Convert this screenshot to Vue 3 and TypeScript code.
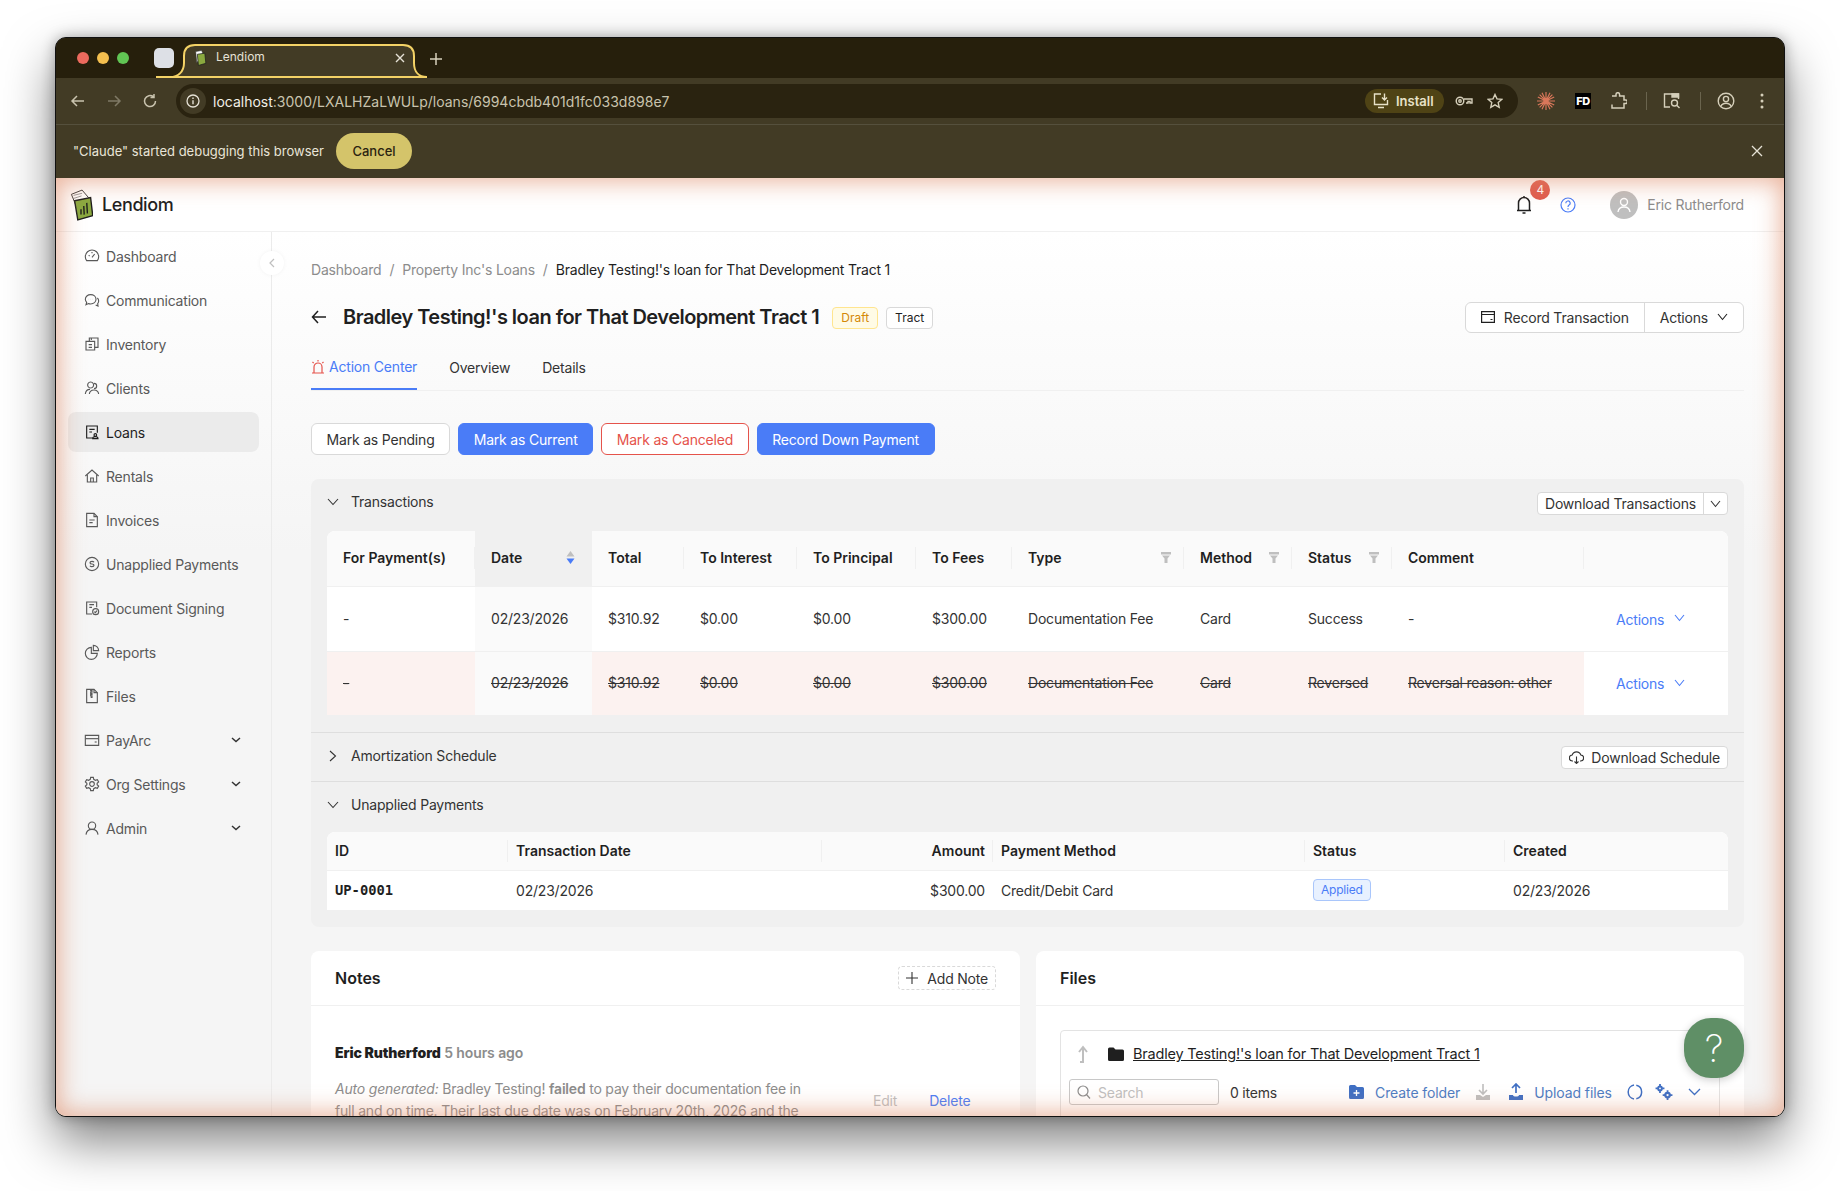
<template>
  <div class="shot">
    <div class="window">
      <div class="tabstrip">
        <div class="lights"><i class="red" /><i class="yellow" /><i class="green" /></div>
        <div class="group-chip" />
        <div class="tab">
          <svg class="tab-shape" width="271" height="34" viewBox="0 0 271 34">
            <path d="M0 33h14c8 0 14-5 14-14V12C28 5 32 1 39 1h208c7 0 11 4 11 11v7c0 9 5 14 13 14z" fill="#423b25" stroke="#f3d266" stroke-width="2" />
          </svg>
          <svg class="tab-fav" width="14" height="16" viewBox="0 0 22 30">
            <path d="M3 3l11-2 3 7-12 16z" fill="#fff" stroke="#333" />
            <path d="M6 8l14-2 2 19-14 4z" fill="#8aa83f" stroke="#1d1d1d" stroke-width="1.4" />
          </svg>
          <span class="tab-title">Lendiom</span>
          <svg class="tab-close" width="10" height="10" viewBox="0 0 10 10"><path d="M1 1l8 8M9 1l-8 8" stroke="#e6e2d6" stroke-width="1.4" /></svg>
        </div>
        <svg class="new-tab" width="12" height="12" viewBox="0 0 12 12"><path d="M6 0v12M0 6h12" stroke="#d8d2bd" stroke-width="1.5" /></svg>
      </div>

      <div class="toolbar">
        <svg class="nav-ic" width="16" height="16" viewBox="0 0 16 16"><path d="M14 8H2M7 3L2 8l5 5" stroke="#c9c3ae" stroke-width="1.5" fill="none" /></svg>
        <svg class="nav-ic" width="16" height="16" viewBox="0 0 16 16"><path d="M2 8h12M9 3l5 5-5 5" stroke="#7f7965" stroke-width="1.5" fill="none" /></svg>
        <svg class="nav-ic" width="16" height="16" viewBox="0 0 16 16"><path d="M13.5 8A5.5 5.5 0 1 1 11.5 3.8M12 1v3.5H8.5" stroke="#c9c3ae" stroke-width="1.5" fill="none" /></svg>
        <div class="urlbar">
          <span class="info-dot">
            <svg width="14" height="14" viewBox="0 0 14 14"><circle cx="7" cy="7" r="6" fill="none" stroke="#e6e2d6" stroke-width="1.3" /><path d="M7 6.3v4M7 3.6V5" stroke="#e6e2d6" stroke-width="1.4" /></svg>
          </span>
          <span class="url"><b>localhost</b>:3000/LXALHZaLWULp/loans/6994cbdb401d1fc033d898e7</span>
          <span class="install">
            <svg width="18" height="18" viewBox="0 0 18 18" fill="none" stroke="#e8e2c8" stroke-width="1.4"><path d="M9 2H2.5v10.500h13V8M6 15.500h6M12.500 1.500v6M10 5.500l2.500 2.500L15 5.500" /></svg>
            Install
          </span>
          <svg class="url-ic" width="18" height="12" viewBox="0 0 18 12" fill="none" stroke="#d5cfba" stroke-width="1.4"><circle cx="5" cy="6" r="3.8" /><circle cx="5" cy="6" r="1.2" /><path d="M9 4h8v4h-2V6.500h-2V8h-2" /></svg>
          <svg class="url-ic star" width="16" height="16" viewBox="0 0 16 16" fill="none" stroke="#d5cfba" stroke-width="1.4"><path d="M8 1.500l2 4.400 4.700.5-3.500 3.200 1 4.700L8 11.900l-4.200 2.400 1-4.700L1.300 6.400 6 5.900z" /></svg>
        </div>
        <svg class="ext spark" width="18" height="18" viewBox="0 0 18 18" stroke="#d9775a" stroke-width="1.2"><path d="M9 0v18M0 9h18M2.600 2.600l12.800 12.800M15.400 2.600L2.600 15.400M5 .8l8 16.400M13 .8L5 17.200M.8 5l16.400 8M17.200 5L.8 13" /></svg>
        <span class="ext fd">FD</span>
        <svg class="ext puzzle" width="16" height="18" viewBox="0 0 16 18" fill="none" stroke="#d5cfba" stroke-width="1.5"><path d="M1 4h4V2.500a1.800 1.800 0 0 1 3.600 0V4H13v4h1.500a1.800 1.800 0 0 1 0 3.600H13V16H1v-3.500" /></svg>
        <i class="tb-sep" />
        <svg class="ext tabsearch" width="18" height="18" viewBox="0 0 18 18" fill="none" stroke="#d5cfba" stroke-width="1.4"><path d="M7 15H1.500V2h14v5" /><path d="M9 2h6.500v3H9z" fill="#d5cfba" /><circle cx="11.500" cy="11" r="3" /><path d="M13.700 13.200l2.800 2.800" /></svg>
        <i class="tb-sep" />
        <svg class="ext profile" width="18" height="18" viewBox="0 0 18 18" fill="none" stroke="#d5cfba" stroke-width="1.4"><circle cx="9" cy="9" r="7.8" /><circle cx="9" cy="7" r="2.6" /><path d="M3.800 14.500c1-2.500 3-3.300 5.200-3.300s4.200.8 5.200 3.300" /></svg>
        <svg class="ext dots" width="4" height="16" viewBox="0 0 4 16" fill="#d5cfba"><circle cx="2" cy="2" r="1.5" /><circle cx="2" cy="8" r="1.5" /><circle cx="2" cy="14" r="1.5" /></svg>
      </div>

      <div class="infobar">
        <span>"Claude" started debugging this browser</span>
        <button class="cancel">Cancel</button>
        <svg class="info-close" width="12" height="12" viewBox="0 0 12 12"><path d="M1 1l10 10M11 1L1 11" stroke="#e6e2d6" stroke-width="1.3" /></svg>
      </div>

      <div class="app">
        <header class="app-head">
          <svg class="logo" width="24" height="32" viewBox="0 0 22 30">
            <path d="M2 5l10-4 6 7-9 14z" fill="#fff" stroke="#333" stroke-width=".9" />
            <path d="M4 6l8-2M3.500 9l8-2.500" stroke="#777" stroke-width=".7" />
            <path d="M5 11l15-3 2 17-14 4z" fill="#8aa83f" stroke="#1d1d1d" stroke-width="1.3" />
            <path d="M11 24v-5M14 24l-.4-8M17 23l-.6-10" stroke="#1d1d1d" stroke-width="1.3" />
          </svg>
          <span class="brand">Lendiom</span>
          <div class="head-right">
            <span class="bell">
              <svg width="16" height="20" viewBox="0 0 16 20" fill="none" stroke="#1f1f1f" stroke-width="1.5"><path d="M8 1v1.500M2.500 15.500V8a5.500 5.500 0 0 1 11 0v7.500M1 15.500h14M6.500 18h3" /></svg>
              <em class="badge">4</em>
            </span>
            <svg class="help-ic" width="16" height="16" viewBox="0 0 16 16" fill="none" stroke="#4a7cf7" stroke-width="1.2"><circle cx="8" cy="8" r="7" /><path d="M5.800 6.200a2.200 2.200 0 1 1 3.300 1.900c-.8.500-1.100.9-1.100 1.800M8 11.200v1.300" /></svg>
            <span class="avatar">
              <svg width="16" height="16" viewBox="0 0 16 16" fill="none" stroke="#fff" stroke-width="1.4"><circle cx="8" cy="5" r="3.5" /><path d="M2 15c.4-3.500 2.800-5 6-5s5.600 1.500 6 5" /></svg>
            </span>
            <span class="user">Eric Rutherford</span>
          </div>
        </header>

        <div class="app-body">
          <aside class="sidebar">
            <button class="collapse-btn">
              <svg width="8" height="10" viewBox="0 0 8 10"><path d="M6 1L2 5l4 4" fill="none" stroke="#bfbfbf" stroke-width="1.2" /></svg>
            </button>
            <div v-for="item in menu" :key="item.label" class="menu-item" :class="{ active: item.label === 'Loans' }">
              <svg class="menu-ic" width="16" height="16" viewBox="0 0 24 24" fill="none" stroke="currentColor" stroke-width="1.7">
                <path v-for="d in icons[item.icon]" :key="d" :d="d" />
              </svg>
              <span>{{ item.label }}</span>
              <svg v-if="item.more" class="menu-caret" width="10" height="6" viewBox="0 0 10 6"><path d="M1 1l4 3.500L9 1" fill="none" stroke="#333" stroke-width="1.5" /></svg>
            </div>
          </aside>

          <main class="main">
            <nav class="crumbs">
              <span>Dashboard</span><i>/</i><span>Property Inc's Loans</span><i>/</i><span class="here">Bradley Testing!'s loan for That Development Tract 1</span>
            </nav>

            <div class="title-row">
              <svg class="back" width="16" height="14" viewBox="0 0 16 14"><path d="M15 7H1.500M7 1L1.500 7 7 13" fill="none" stroke="#1f1f1f" stroke-width="1.5" /></svg>
              <h1>Bradley Testing!'s loan for That Development Tract 1</h1>
              <span class="tag draft">Draft</span>
              <span class="tag">Tract</span>
              <div class="title-actions">
                <button class="seg">
                  <svg width="14" height="12" viewBox="0 0 14 12" fill="none" stroke="#1f1f1f" stroke-width="1.2"><path d="M.6.600h12.800v10.800H.6zM.6 3.500h12.800M9.500 8.500h2" /></svg>
                  Record Transaction
                </button>
                <button class="seg">
                  Actions
                  <svg width="11" height="8" viewBox="0 0 11 8"><path d="M1 1l4.500 5.500L10 1" fill="none" stroke="#1f1f1f" stroke-width="1.1" /></svg>
                </button>
              </div>
            </div>

            <div class="tabs">
              <div class="tab-link current">
                <svg width="14" height="15" viewBox="0 0 14 15" fill="none" stroke="#e5534b" stroke-width="1.2"><path d="M1 14h12M3 14V8a4 4 0 0 1 8 0v6M7 1v1.500M1.500 3l1.200 1.200M12.500 3l-1.200 1.200" /></svg>
                Action Center
              </div>
              <div class="tab-link">Overview</div>
              <div class="tab-link">Details</div>
            </div>

            <div class="actions-row">
              <button class="btn">Mark as Pending</button>
              <button class="btn primary">Mark as Current</button>
              <button class="btn danger">Mark as Canceled</button>
              <button class="btn primary">Record Down Payment</button>
            </div>

            <section class="panel">
              <div class="panel-head first">
                <svg class="chev" width="12" height="8" viewBox="0 0 12 8"><path d="M1 1l5 5.500L11 1" fill="none" stroke="#333" stroke-width="1.1" /></svg>
                <span>Transactions</span>
                <div class="mini-group">
                  <button>Download Transactions</button>
                  <button class="mini-caret"><svg width="11" height="8" viewBox="0 0 11 8"><path d="M1 1l4.500 5.500L10 1" fill="none" stroke="#333" stroke-width="1.1" /></svg></button>
                </div>
              </div>
              <div class="panel-body">
                <table class="grid tx">
                  <colgroup><col v-for="c in txCols" :key="c.name" :style="{ width: c.width + 'px' }" /></colgroup>
                  <thead>
                    <tr>
                      <th v-for="c in txCols" :key="c.name" :class="{ sorted: c.name === 'Date' }">
                        <div class="th-in">
                          <span>{{ c.name }}</span>
                          <svg v-if="c.filter" width="10" height="11" viewBox="0 0 10 11" fill="#bfbfbf"><path d="M0 0h10v2.500H0zM1 3.500h8L6.500 6.500V11h-3V6.500z" /></svg>
                          <svg v-if="c.name === 'Date'" width="9" height="15" viewBox="0 0 9 15"><path d="M4.500 1L8.500 6.500H.5z" fill="#bfbfbf" /><path d="M.5 8.500h8l-4 5.500z" fill="#4a7cf7" /></svg>
                        </div>
                      </th>
                    </tr>
                  </thead>
                  <tbody>
                    <tr v-for="(row, i) in txRows" :key="i" :class="{ reversed: row.reversed }">
                      <td v-for="(val, j) in row.cells" :key="j" :class="{ 'date-cell': j === 1 }"><span class="cell-text">{{ val }}</span></td>
                      <td class="act-cell">
                        <span class="act">Actions
                          <svg width="11" height="8" viewBox="0 0 11 8"><path d="M1 1l4.500 5.500L10 1" fill="none" stroke="#4a7cf7" stroke-width="1.1" /></svg>
                        </span>
                      </td>
                    </tr>
                  </tbody>
                </table>
              </div>

              <div class="panel-head bordered">
                <svg class="chev" width="8" height="12" viewBox="0 0 8 12"><path d="M1 1l5.500 5L1 11" fill="none" stroke="#333" stroke-width="1.1" /></svg>
                <span>Amortization Schedule</span>
                <div class="mini-group">
                  <button class="with-ic">
                    <svg width="15" height="13" viewBox="0 0 15 13" fill="none" stroke="#333" stroke-width="1.1"><path d="M4 10H3.500a3 3 0 0 1-.3-6A4.500 4.500 0 0 1 11.800 4a3 3 0 0 1-.3 6H11M7.500 5.500V12.500M5.500 10.500l2 2 2-2" /></svg>
                    Download Schedule
                  </button>
                </div>
              </div>

              <div class="panel-head bordered short">
                <svg class="chev" width="12" height="8" viewBox="0 0 12 8"><path d="M1 1l5 5.500L11 1" fill="none" stroke="#333" stroke-width="1.1" /></svg>
                <span>Unapplied Payments</span>
              </div>
              <div class="panel-body">
                <table class="grid small">
                  <colgroup><col v-for="c in upCols" :key="c.name" :style="{ width: c.width + 'px' }" /></colgroup>
                  <thead>
                    <tr><th v-for="c in upCols" :key="c.name" :class="{ right: c.name === 'Amount' }">{{ c.name }}</th></tr>
                  </thead>
                  <tbody>
                    <tr>
                      <td class="mono">UP-0001</td>
                      <td>02/23/2026</td>
                      <td class="right">$300.00</td>
                      <td>Credit/Debit Card</td>
                      <td><span class="applied">Applied</span></td>
                      <td>02/23/2026</td>
                    </tr>
                  </tbody>
                </table>
              </div>
            </section>

            <div class="cards">
              <section class="card">
                <div class="card-head">
                  <h2>Notes</h2>
                  <button class="dashed">
                    <svg width="12" height="12" viewBox="0 0 12 12"><path d="M6 0v12M0 6h12" stroke="#333" stroke-width="1.1" /></svg>
                    Add Note
                  </button>
                </div>
                <div class="note">
                  <p class="note-by"><b>Eric Rutherford</b> <span>5 hours ago</span></p>
                  <div class="note-row">
                    <p class="note-text"><em>Auto generated:</em> Bradley Testing! <b>failed</b> to pay their documentation fee in full and on time. Their last due date was on February 20th, 2026 and the</p>
                    <span class="note-edit">Edit</span>
                    <span class="note-del">Delete</span>
                  </div>
                </div>
              </section>

              <section class="card">
                <div class="card-head"><h2>Files</h2></div>
                <div class="browser">
                  <div class="path-row">
                    <svg width="12" height="18" viewBox="0 0 12 18" fill="none" stroke="#bfbfbf" stroke-width="2"><path d="M3 17h3V3M2 7l4-5 4 5" /></svg>
                    <svg class="folder" width="16" height="14" viewBox="0 0 16 14" fill="#1f1f1f"><path d="M0 2a1.500 1.500 0 0 1 1.500-1.500h4L7.500 2.500h7A1.500 1.500 0 0 1 16 4v8.500a1.500 1.500 0 0 1-1.500 1.500h-13A1.500 1.500 0 0 1 0 12.500z" /></svg>
                    <a>Bradley Testing!'s loan for That Development Tract 1</a>
                  </div>
                  <div class="file-tools">
                    <div class="search">
                      <svg width="14" height="14" viewBox="0 0 14 14" fill="none" stroke="#8c8c8c" stroke-width="1.2"><circle cx="6" cy="6" r="5" /><path d="M9.500 9.500L13 13.500" /></svg>
                      <span>Search</span>
                    </div>
                    <span class="count">0 items</span>
                    <svg class="create-ic" width="15" height="14" viewBox="0 0 15 14"><path d="M0 1.500A1.500 1.500 0 0 1 1.500 0H6l2 2h5.500A1.500 1.500 0 0 1 15 3.500v9a1.500 1.500 0 0 1-1.500 1.500h-12A1.500 1.500 0 0 1 0 12.500z" fill="#3f6fc4" /><path d="M7.500 5v6M4.500 8h6" stroke="#fff" stroke-width="1.3" /></svg>
                    <span class="file-link create">Create folder</span>
                    <svg class="dl-ic" width="16" height="16" viewBox="0 0 16 16"><path d="M8 0v9M4 6l4 4 4-4" fill="none" stroke="#bfbfbf" stroke-width="1.6" /><path d="M1 11h4l3 2 3-2h4v5H1z" fill="#bfbfbf" /></svg>
                    <svg class="ul-ic" width="16" height="18" viewBox="0 0 16 18"><path d="M8 10V1M4 5l4-4 4 4" fill="none" stroke="#3f6fc4" stroke-width="1.7" /><path d="M1 12h4c0 2 6 2 6 0h4v5H1z" fill="#3f6fc4" /></svg>
                    <span class="file-link">Upload files</span>
                    <svg class="ring-ic" width="16" height="16" viewBox="0 0 16 16" fill="none" stroke="#3f6fc4" stroke-width="1.5"><path d="M7 1.100A7 7 0 0 0 7 14.900M9.300 1.200A7 7 0 0 1 9.300 14.800" /></svg>
                    <svg class="gear-ic" width="18" height="16" viewBox="0 0 19 18" fill="#3f6fc4"><circle cx="5" cy="5" r="3.200" /><path d="M4 0h2v2.500H4zM4 7.500h2V10H4zM0 4h2.500v2H0zM7.500 4H10v2H7.500z" /><circle cx="5" cy="5" r="1" fill="#fff" /><circle cx="13.500" cy="12.500" r="3.800" /><path d="M12.500 7h2v3h-2zM12.500 15h2v3h-2zM8 11.500h3v2H8zM16 11.500h3v2h-3z" /><circle cx="13.500" cy="12.500" r="1.300" fill="#fff" /></svg>
                    <svg class="more-ic" width="13" height="8" viewBox="0 0 13 8"><path d="M1 1l5.500 5.500L12 1" fill="none" stroke="#3f6fc4" stroke-width="1.3" /></svg>
                  </div>
                </div>
              </section>
            </div>
          </main>
        </div>

        <button class="help-fab">?</button>
        <div class="glow" />
      </div>
    </div>
  </div>
</template>

<script setup lang="ts">
interface MenuItem {
  label: string
  icon: string
  more?: boolean
}

interface Col {
  name: string
  width: number
  filter?: boolean
}

const icons: Record<string, string[]> = {
  gauge: ['M4 19a10 10 0 1 1 16 0z', 'M12 14l4-5', 'M7 11l1.500 1M12 6v2'],
  chat: ['M2 11c0-4 3.500-7 8-7s8 3 8 7-3.500 7-8 7c-1.200 0-2.300-.2-3.300-.6L3 19l1-3.500A6.500 6.500 0 0 1 2 11z', 'M7 11h.1M10 11h.1M13 11h.1', 'M20 9c1.500 1.200 2 3 2 4.500 0 1.500-.5 2.800-1.500 3.800L21 21l-3.500-1.500'],
  copies: ['M3 8h13v13H3z', 'M8 8V3h13v14h-5', 'M7 13h5M7 17h5M11 3v3'],
  people: ['M10 12a4.500 4.500 0 1 0-.1 0M2 21c.5-5 3.500-7 7-7', 'M15 13a4 4 0 1 0 0-8', 'M8 21c.5-4 3-6 7-6s6.500 2 7 6'],
  loan: ['M13 21H4V3h16v10', 'M8 8h8M8 12h4', 'M17 14.500a2 2 0 1 0 0 4 2 2 0 0 0 0-4zM13 22c0-2 2-3 4-3s4 1 4 3z'],
  home: ['M2 12L12 3l10 9', 'M5 10v11h14V10', 'M10 21v-6h4v6'],
  invoice: ['M4 2h11l5 5v15H4z', 'M15 2v5h5', 'M8 12h8M8 16h5'],
  dollar: ['M12 2a10 10 0 1 0 0 20 10 10 0 0 0 0-20z', 'M15 9.500c-.5-1-1.500-1.500-3-1.500-2 0-3 1-3 2s1 2 3 2 3 1 3 2-1 2-3 2c-1.500 0-2.500-.5-3-1.500'],
  sign: ['M12 21H4V3h15v8', 'M8 7h7M8 11h4', 'M17.500 13a4.500 4.500 0 1 0 0 9 4.500 4.500 0 0 0 0-9z', 'M15.500 17.500l1.500 1.500 2.500-3'],
  pie: ['M11 5a9 9 0 1 0 9 9h-9z', 'M14 2a8 8 0 0 1 8 8h-8z'],
  zip: ['M4 2h11l5 5v15H4z', 'M15 2v5h5', 'M10 2v2h2v2h-2v2h2v2h-2v2h2v2h-2'],
  card: ['M2 5h20v15H2z', 'M2 10h20', 'M16 15h3'],
  gear: ['M12 8.500a3.500 3.500 0 1 0 0 7 3.500 3.500 0 0 0 0-7z', 'M10 2h4l.6 3 2.400 1.400 3-1 2 3.500-2.300 2v2.200l2.300 2-2 3.500-3-1L14.600 19l-.6 3h-4l-.6-3L7 17.600l-3 1-2-3.500 2.300-2v-2.200L2 8.900l2-3.500 3 1L9.400 5z'],
  user: ['M12 3a5.500 5.500 0 1 0 0 11 5.500 5.500 0 0 0 0-11z', 'M3 22c.5-5 4-8 9-8s8.500 3 9 8'],
}

const menu: MenuItem[] = [
  { label: 'Dashboard', icon: 'gauge' },
  { label: 'Communication', icon: 'chat' },
  { label: 'Inventory', icon: 'copies' },
  { label: 'Clients', icon: 'people' },
  { label: 'Loans', icon: 'loan' },
  { label: 'Rentals', icon: 'home' },
  { label: 'Invoices', icon: 'invoice' },
  { label: 'Unapplied Payments', icon: 'dollar' },
  { label: 'Document Signing', icon: 'sign' },
  { label: 'Reports', icon: 'pie' },
  { label: 'Files', icon: 'zip' },
  { label: 'PayArc', icon: 'card', more: true },
  { label: 'Org Settings', icon: 'gear', more: true },
  { label: 'Admin', icon: 'user', more: true },
]

const txCols: Col[] = [
  { name: 'For Payment(s)', width: 148 },
  { name: 'Date', width: 117 },
  { name: 'Total', width: 92 },
  { name: 'To Interest', width: 113 },
  { name: 'To Principal', width: 119 },
  { name: 'To Fees', width: 96 },
  { name: 'Type', width: 172, filter: true },
  { name: 'Method', width: 108, filter: true },
  { name: 'Status', width: 100, filter: true },
  { name: 'Comment', width: 192 },
  { name: '', width: 144 },
]

const txRows = [
  { reversed: false, cells: ['-', '02/23/2026', '$310.92', '$0.00', '$0.00', '$300.00', 'Documentation Fee', 'Card', 'Success', '-'] },
  { reversed: true, cells: ['-', '02/23/2026', '$310.92', '$0.00', '$0.00', '$300.00', 'Documentation Fee', 'Card', 'Reversed', 'Reversal reason: other'] },
]

const upCols: Col[] = [
  { name: 'ID', width: 181 },
  { name: 'Transaction Date', width: 314 },
  { name: 'Amount', width: 171 },
  { name: 'Payment Method', width: 312 },
  { name: 'Status', width: 200 },
  { name: 'Created', width: 223 },
]
</script>

<style>
html,
body {
  margin: 0;
  background: #fff;
}
</style>

<style scoped>
.shot {
  width: 1840px;
  height: 1191px;
  padding: 37px 0 0 55px;
  box-sizing: border-box;
  overflow: hidden;
  background: #fff;
  font-family: Inter, "Liberation Sans", sans-serif;
  font-size: 14px;
  letter-spacing: -0.2px;
  color: #1f1f1f;
}

.window {
  width: 1730px;
  height: 1080px;
  box-sizing: border-box;
  border: 1px solid #111;
  border-radius: 11px;
  overflow: hidden;
  display: flex;
  flex-direction: column;
  background: #423b25;
  box-shadow: 0 24px 50px rgba(0, 0, 0, 0.5), 0 0 14px rgba(0, 0, 0, 0.3);
}

button {
  font: inherit;
  letter-spacing: inherit;
  cursor: pointer;
}

/* browser chrome */
.tabstrip {
  flex: none;
  height: 40px;
  display: flex;
  align-items: flex-start;
  background: #261f0c;
  letter-spacing: 0;
}

.lights {
  display: flex;
  gap: 8px;
  padding: 14px 0 0 21px;
}

.lights i {
  width: 12px;
  height: 12px;
  border-radius: 50%;
}

.red { background: #ec6a5e; }
.yellow { background: #f4bf4f; }
.green { background: #61c554; }

.group-chip {
  position: relative;
  z-index: 1;
  width: 20px;
  height: 20px;
  margin: 10px 0 0 25px;
  border-radius: 5px;
  background: #dde0e6;
}

.tab {
  position: relative;
  width: 271px;
  height: 34px;
  margin: 6px 0 0 -18px;
  color: #e6e2d6;
}

.tab-shape {
  position: absolute;
  left: 0;
  top: 0;
}

.tab-fav {
  position: absolute;
  left: 37px;
  top: 6px;
}

.tab-title {
  position: absolute;
  left: 60px;
  top: 4px;
  font-size: 12px;
  line-height: 18px;
}

.tab-close {
  position: absolute;
  left: 239px;
  top: 9px;
}

.new-tab {
  margin: 15px 0 0 3px;
}

.toolbar {
  flex: none;
  height: 47px;
  box-sizing: border-box;
  display: flex;
  align-items: center;
  background: #423b25;
  border-radius: 11px 11px 0 0;
  border-bottom: 1px solid #55503d;
  padding-left: 14px;
  letter-spacing: 0;
}

.nav-ic {
  margin-right: 20px;
}

.urlbar {
  width: 1342px;
  height: 34px;
  margin-left: -2px;
  display: flex;
  align-items: center;
  border-radius: 17px;
  background: #2a2310;
  padding: 0 4px;
  box-sizing: border-box;
}

.info-dot {
  width: 26px;
  height: 26px;
  display: flex;
  align-items: center;
  justify-content: center;
  border-radius: 50%;
  background: #423b25;
}

.url {
  margin-left: 7px;
  flex: 1;
  color: #c9c3ae;
  font-size: 14px;
}

.url b {
  color: #f2efe6;
  font-weight: 400;
}

.install {
  width: 79px;
  height: 24px;
  box-sizing: border-box;
  padding-left: 7px;
  display: flex;
  align-items: center;
  gap: 6px;
  border-radius: 12px;
  background: #4f4315;
  color: #e8e2c8;
  font-size: 13px;
  font-weight: 600;
}

.url-ic {
  margin-left: 11px;
}

.url-ic.star {
  margin: 0 11px 0 14px;
}

.ext {
  flex: none;
}

.spark { margin-left: 19px; }

.fd {
  width: 16px;
  height: 16px;
  margin-left: 20px;
  background: #000;
  color: #fff;
  font-size: 11px;
  font-weight: 800;
  letter-spacing: -0.5px;
  line-height: 16px;
  text-align: center;
}

.puzzle { margin-left: 20px; }

.tb-sep {
  width: 1px;
  height: 18px;
  margin: 0 16px 0 19px;
  background: #6a644e;
}

.dots { margin-left: 25px; }

.infobar {
  flex: none;
  height: 53px;
  box-sizing: border-box;
  padding: 0 0 2px 17px;
  display: flex;
  align-items: center;
  color: #e9e5d8;
  font-size: 13px;
  background: #423b25;
  letter-spacing: 0;
}

.cancel {
  width: 76px;
  height: 36px;
  margin-left: 12px;
  border: 0;
  border-radius: 18px;
  background: #d4c46a;
  color: #2a2310;
  font-size: 13px;
  font-weight: 500;
}

.info-close {
  margin-left: auto;
  margin-right: 21px;
}

/* app */
.app {
  position: relative;
  flex: 1;
  min-height: 0;
  display: flex;
  flex-direction: column;
  background: #fff;
  overflow: hidden;
}

.glow {
  position: absolute;
  inset: 0;
  pointer-events: none;
  box-shadow: inset 0 0 24px 3px rgba(222, 140, 105, 0.68);
}

.app-head {
  flex: none;
  height: 54px;
  box-sizing: border-box;
  display: flex;
  align-items: center;
  padding: 0 40px 0 13px;
  border-bottom: 1px solid #f0f0f0;
}

.logo {
  margin-right: 9px;
}

.brand {
  font-size: 18px;
  font-weight: 500;
  letter-spacing: -0.4px;
}

.head-right {
  margin-left: auto;
  display: flex;
  align-items: center;
}

.bell {
  position: relative;
  display: flex;
  margin-right: 28px;
}

.badge {
  position: absolute;
  left: 14px;
  top: -15px;
  width: 20px;
  height: 20px;
  border-radius: 50%;
  background: #df5c4e;
  color: #fff;
  font-size: 12px;
  font-style: normal;
  line-height: 20px;
  text-align: center;
}

.help-ic {
  margin-right: 34px;
}

.avatar {
  width: 28px;
  height: 28px;
  display: flex;
  align-items: center;
  justify-content: center;
  border-radius: 50%;
  background: #bfbfbf;
  margin-right: 9px;
}

.user {
  color: #8c8c8c;
  font-size: 14px;
}

.app-body {
  flex: 1;
  min-height: 0;
  display: flex;
}

.sidebar {
  position: relative;
  flex: none;
  width: 216px;
  box-sizing: border-box;
  padding: 4px 12px 0;
  border-right: 1px solid #ebebeb;
  background: linear-gradient(180deg, #fff 0, #f5f5f5 320px);
}

.collapse-btn {
  position: absolute;
  right: -13px;
  top: 19px;
  width: 24px;
  height: 24px;
  padding: 0;
  border: 0;
  border-radius: 50%;
  background: #fff;
  box-shadow: 0 0 4px rgba(0, 0, 0, 0.05);
  display: flex;
  align-items: center;
  justify-content: center;
}

.menu-item {
  height: 40px;
  margin-bottom: 4px;
  display: flex;
  align-items: center;
  gap: 6px;
  padding: 0 16px;
  border-radius: 8px;
  color: #595959;
}

.menu-item.active {
  background: #ebebeb;
  color: #1f1f1f;
}

.menu-caret {
  margin-left: auto;
  margin-right: 2px;
}

.main {
  flex: 1;
  min-width: 0;
  padding: 27px 40px 0 39px;
  background: linear-gradient(180deg, #fff 0, #f5f5f5 320px);
}

.crumbs {
  display: flex;
  gap: 8px;
  line-height: 22px;
  color: #8c8c8c;
}

.crumbs i {
  font-style: normal;
}

.crumbs .here {
  color: #1f1f1f;
}

.title-row {
  height: 30px;
  margin-top: 21px;
  display: flex;
  align-items: center;
}

.back {
  margin-right: 16px;
}

.title-row h1 {
  margin: 0 13px 0 0;
  font-size: 20px;
  font-weight: 600;
  letter-spacing: -0.52px;
}

.tag {
  height: 22px;
  box-sizing: border-box;
  padding: 0 8px;
  margin-top: 1px;
  margin-right: 8px;
  border: 1px solid #d9d9d9;
  border-radius: 4px;
  font-size: 12px;
  letter-spacing: 0;
  line-height: 20px;
  background: #fff;
}

.tag.draft {
  border-color: #ffe58f;
  background: #fffbe6;
  color: #d48806;
}

.title-actions {
  margin-left: auto;
  display: flex;
  height: 31px;
  border: 1px solid #d9d9d9;
  border-radius: 6px;
  background: #fff;
  box-sizing: border-box;
}

.seg {
  display: flex;
  align-items: center;
  gap: 9px;
  padding: 0 15px;
  border: 0;
  background: none;
  color: #333;
}

.seg + .seg {
  border-left: 1px solid #d9d9d9;
}

.tabs {
  display: flex;
  gap: 32px;
  margin-top: 13px;
  border-bottom: 1px solid #f0f0f0;
}

.tab-link {
  height: 45px;
  box-sizing: border-box;
  display: flex;
  align-items: center;
  gap: 4px;
  color: #333;
}

.tab-link.current {
  color: #4a7cf7;
  border-bottom: 2px solid #4a7cf7;
  margin-bottom: -1px;
}

.actions-row {
  display: flex;
  gap: 8px;
  margin-top: 32px;
}

.btn {
  height: 32px;
  padding: 0 14.6px;
  border: 1px solid #d9d9d9;
  border-radius: 6px;
  background: #fff;
  color: #333;
}

.btn.primary {
  border-color: #4a7cf7;
  background: #4a7cf7;
  color: #fff;
}

.btn.danger {
  border-color: #e5534b;
  color: #e5534b;
}

.panel {
  margin-top: 24px;
  border-radius: 8px;
  background: #f0f0f0;
  padding-bottom: 17px;
}

.panel-head {
  height: 48px;
  box-sizing: border-box;
  display: flex;
  align-items: center;
  padding: 0 16px;
  color: #333;
}

.panel-head.first {
  height: 52px;
  padding-bottom: 7px;
}

.panel-head.bordered {
  border-top: 1px solid #dedede;
  height: 49px;
  padding-bottom: 3px;
}

.panel-head.short {
  height: 51px;
  padding-bottom: 5px;
}

.panel-head .chev {
  width: 12px;
  margin-right: 12px;
}

.mini-group {
  margin-left: auto;
  margin-top: 4px;
  display: flex;
  height: 23px;
  border: 1px solid #d9d9d9;
  border-radius: 4px;
  background: #fff;
  box-sizing: border-box;
}

.mini-group button {
  border: 0;
  padding: 0 7px;
  background: none;
  color: #333;
  display: flex;
  align-items: center;
}

.mini-group .mini-caret {
  padding: 0 6px;
  border-left: 1px solid #d9d9d9;
}

.mini-group .with-ic {
  gap: 7px;
}

.panel-body {
  padding: 0 16px 17px;
}

.panel-body:last-child {
  padding-bottom: 0;
}

.grid {
  width: 1401px;
  table-layout: fixed;
  border-collapse: collapse;
  background: #fff;
  border-radius: 8px 8px 0 0;
  overflow: hidden;
}

.grid th {
  position: relative;
  height: 55px;
  padding: 0 16px;
  box-sizing: border-box;
  background: #fafafa;
  border-bottom: 1px solid #f0f0f0;
  font-weight: 600;
  letter-spacing: 0;
  text-align: left;
  color: #1f1f1f;
}

.tx th,
.tx td {
  padding-bottom: 2px;
}

.grid th:not(:last-child)::after {
  content: "";
  position: absolute;
  right: 0;
  top: 50%;
  width: 1px;
  height: 22px;
  margin-top: -11px;
  background: #f0f0f0;
}

.grid th.sorted {
  background: #f0f0f0;
}

.th-in {
  display: flex;
  align-items: center;
  justify-content: space-between;
  margin-right: -3px;
}

.sorted .th-in {
  margin-right: 1px;
}

.grid td {
  height: 65px;
  padding-left: 16px;
  padding-right: 16px;
  box-sizing: border-box;
  color: #333;
  border-bottom: 1px solid #f0f0f0;
  white-space: nowrap;
}

.tx tbody tr:last-child td {
  height: 64px;
  border-bottom: 0;
}

.tx td.date-cell {
  background: #fafafa;
}

.reversed td {
  background: #fcf2f0;
}

.reversed .cell-text {
  text-decoration: line-through;
}

.tx td.act-cell {
  background: #fff;
  padding-left: 32px;
}

.act {
  display: inline-flex;
  align-items: center;
  gap: 10px;
  position: relative;
  top: 1px;
  color: #4a7cf7;
}

.act svg {
  margin-top: -2px;
}

.small th {
  height: 38px;
  padding: 0 8px;
}

.small td {
  height: 40px;
  padding: 0 8px;
  border-bottom: 0;
}

.small .right {
  text-align: right;
}

.mono {
  font-family: "DejaVu Sans Mono", monospace;
  font-size: 13.8px;
  font-weight: 700;
  letter-spacing: 0;
  color: #1f1f1f !important;
}

.applied {
  display: inline-block;
  height: 22px;
  box-sizing: border-box;
  padding: 0 7px;
  border: 1px solid #a9c6fb;
  border-radius: 4px;
  background: #e8f1ff;
  color: #4a7cf7;
  font-size: 12px;
  line-height: 20px;
}

.cards {
  display: grid;
  grid-template-columns: 709px 708px;
  gap: 16px;
  margin-top: 24px;
}

.card {
  border-radius: 8px 8px 0 0;
  background: #fff;
  height: 300px;
}

.card-head {
  height: 55px;
  box-sizing: border-box;
  display: flex;
  align-items: center;
  justify-content: space-between;
  padding: 0 24px;
  border-bottom: 1px solid #f0f0f0;
}

.card-head h2 {
  margin: 0;
  font-size: 16px;
  font-weight: 600;
  letter-spacing: 0;
}

.dashed {
  height: 24px;
  display: flex;
  align-items: center;
  gap: 9px;
  padding: 0 7px;
  border: 1px dashed #d9d9d9;
  border-radius: 4px;
  background: #fff;
  color: #333;
}

.note {
  padding: 36px 24px 0;
}

.note p {
  margin: 0;
}

.note-by {
  line-height: 22px;
  font-weight: 600;
  letter-spacing: -0.1px;
}

.note-by span {
  color: #8c8c8c;
}

.note-row {
  display: flex;
  align-items: center;
  height: 44px;
  margin-top: 14px;
}

.note-text {
  flex: none;
  width: 478px;
  line-height: 22px;
  color: #8c8c8c;
}

.note-text b {
  font-weight: 600;
}

.note-edit {
  margin-left: 60px;
  color: #bfbfbf;
}

.note-del {
  margin-left: 32px;
  color: #4a7cf7;
}

.browser {
  margin: 24px 24px 0;
  height: 200px;
  border: 1px solid #e3e3e3;
  border-radius: 4px;
  padding: 0 8px;
}

.path-row {
  height: 45px;
  display: flex;
  align-items: center;
  padding-left: 8px;
}

.folder {
  margin-left: 19px;
  margin-right: 9px;
}

.path-row a {
  font-size: 14.5px;
  color: #1f1f1f;
  text-decoration: underline;
}

.file-tools {
  display: flex;
  align-items: center;
  height: 26px;
  margin-top: 3px;
}

.search {
  width: 150px;
  height: 26px;
  box-sizing: border-box;
  display: flex;
  align-items: center;
  gap: 7px;
  padding-left: 7px;
  border: 1px solid #c8c8c8;
  border-radius: 3px;
  color: #bfbfbf;
}

.count {
  margin-left: 11px;
  color: #333;
}

.create-ic {
  margin-left: 72px;
}

.file-link {
  margin-left: 11px;
  letter-spacing: -0.1px;
  color: #4d7cc4;
}

.dl-ic {
  margin-left: 15px;
}

.ul-ic {
  margin-left: 17px;
}

.ul-ic + .file-link {
  margin-left: 10px;
}

.ring-ic {
  margin-left: 15px;
}

.gear-ic {
  margin-left: 12px;
}

.more-ic {
  margin-left: 15px;
}

.help-fab {
  position: absolute;
  right: 40px;
  bottom: 38px;
  width: 60px;
  height: 60px;
  padding: 0;
  border: 0;
  border-radius: 27px;
  background: #5f8f66;
  color: #fff;
  font-size: 38px;
  font-weight: 200;
  box-shadow: 0 2px 8px rgba(0, 0, 0, 0.2);
}
</style>
